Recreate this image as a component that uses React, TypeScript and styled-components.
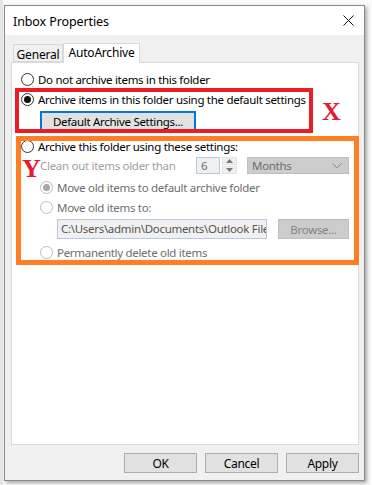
import React from "react";
import styled, { createGlobalStyle } from "styled-components";

const GlobalStyle = createGlobalStyle`
  html, body {
    margin: 0;
    padding: 0;
    background: #fbfbfb;
  }
  body {
    font-family: "Noto Sans", "Open Sans", sans-serif;
    font-size: 11.5px;
    letter-spacing: -0.3px;
    color: #000;
  }
`;

const Desk = styled.div`
  width: 372px;
  height: 485px;
  overflow: hidden;
  padding: 5px 0 0 4px;
  box-sizing: border-box;
  background: linear-gradient(90deg, #e6e6e6 0 3px, #fbfbfb 3px);
`;

const Window = styled.div`
  width: 361px;
  height: 476px;
  box-sizing: border-box;
  border: 1px solid #8a8a8a;
  background: #f0f0f0;
  box-shadow: 2px 2px 4px rgba(0, 0, 0, 0.35);
  display: flex;
  flex-direction: column;
`;

const TitleBar = styled.div`
  height: 29px;
  background: #fff;
  display: flex;
  align-items: center;
  justify-content: space-between;
  padding: 0 10px 0 8px;
  flex-shrink: 0;
`;

const Title = styled.span`
  font-size: 12.5px;
  letter-spacing: -0.1px;
  margin-top: 1px;
`;

const Body = styled.div`
  flex: 1;
  display: flex;
  flex-direction: column;
  padding: 7px 6px 0 6px;
`;

const TabStrip = styled.div`
  display: flex;
  align-items: flex-end;
  height: 20px;
  padding-left: 2px;
  position: relative;
  z-index: 1;
`;

const Tab = styled.div<{ $active?: boolean; $w: number }>`
  width: ${(p) => p.$w}px;
  height: ${(p) => (p.$active ? "20px" : "18px")};
  box-sizing: border-box;
  border: 1px solid #d9d9d9;
  border-bottom: ${(p) => (p.$active ? "none" : "1px solid #d9d9d9")};
  background: ${(p) => (p.$active ? "#fff" : "#f0f0f0")};
  padding-top: ${(p) => (p.$active ? "1px" : "2px")};
  margin-bottom: ${(p) => (p.$active ? "-1px" : "0")};
  text-align: center;
  line-height: 15px;
  font-size: 12px;
  letter-spacing: -0.2px;
`;

const Panel = styled.div`
  position: relative;
  width: 348px;
  height: 383px;
  box-sizing: border-box;
  border: 1px solid #d9d9d9;
  background: #fff;
  padding: 6px 0 0 9px;
  display: flex;
  flex-direction: column;
`;

const RadioRow = styled.div<{ $indent?: boolean; $dim?: boolean }>`
  height: 20px;
  display: flex;
  align-items: center;
  gap: 4px;
  padding-left: ${(p) => (p.$indent ? "19px" : "0")};
  color: ${(p) => (p.$dim ? "#6d6d6d" : "#000")};
  white-space: nowrap;
`;

const Radio = styled.span<{ $checked?: boolean; $dim?: boolean }>`
  width: 13px;
  height: 13px;
  box-sizing: border-box;
  border-radius: 50%;
  border: 1px solid ${(p) => (p.$dim ? "#bcbcbc" : "#333")};
  background: #fff;
  display: flex;
  align-items: center;
  justify-content: center;
  flex-shrink: 0;
  &::after {
    content: "";
    width: 7px;
    height: 7px;
    border-radius: 50%;
    background: ${(p) => (p.$dim ? "#a8a8a8" : "#111")};
    display: ${(p) => (p.$checked ? "block" : "none")};
  }
`;

const Button = styled.button<{ $focus?: boolean; $disabled?: boolean }>`
  height: 20px;
  box-sizing: border-box;
  font-family: "Noto Sans", "Open Sans", sans-serif;
  font-size: 11.5px;
  letter-spacing: -0.3px;
  padding: 0;
  background: ${(p) => (p.$disabled ? "#cccccc" : "#e1e1e1")};
  color: ${(p) => (p.$disabled ? "#838383" : "#000")};
  border: ${(p) =>
    p.$focus ? "2px solid #0078d7" : p.$disabled ? "1px solid #bfbfbf" : "1px solid #adadad"};
  display: flex;
  align-items: center;
  justify-content: center;
`;

const DefaultButton = styled(Button)`
  width: 156px;
  margin: 2px 0 0 19px;
`;

const SettingsRow = styled.div`
  display: flex;
  align-items: center;
  height: 17px;
  margin-top: 1px;
  padding-left: 19px;
`;

const DimLabel = styled.span`
  color: #a0a0a0;
  width: 156px;
  white-space: nowrap;
`;

const SpinBox = styled.div`
  width: 24px;
  height: 17px;
  box-sizing: border-box;
  border: 1px solid #b7c9de;
  background: #f0f0f0;
  color: #6d6d6d;
  padding-left: 4px;
  line-height: 15px;
`;

const Spinner = styled.div`
  width: 15px;
  height: 17px;
  margin-left: 2px;
  display: flex;
  flex-direction: column;
  gap: 1px;
`;

const SpinHalf = styled.div`
  flex: 1;
  background: #f0f0f0;
  border: 1px solid #e3e3e3;
  display: flex;
  align-items: center;
  justify-content: center;
`;

const Select = styled.div`
  margin-left: 10px;
  width: 102px;
  height: 17px;
  box-sizing: border-box;
  background: #cccccc;
  border: 1px solid #bfbfbf;
  color: #6d6d6d;
  display: flex;
  align-items: center;
  justify-content: space-between;
  padding: 0 6px 0 4px;
`;

const PathRow = styled.div`
  display: flex;
  align-items: center;
  gap: 11px;
  margin: 2px 0 3px 36px;
`;

const PathBox = styled.div`
  width: 210px;
  height: 20px;
  box-sizing: border-box;
  border: 1px solid #b7c9de;
  background: #f0f0f0;
  color: #555;
  padding-left: 3px;
  line-height: 18px;
  overflow: hidden;
  white-space: nowrap;
`;

const BrowseButton = styled(Button)`
  width: 71px;
`;

const Footer = styled.div`
  display: flex;
  justify-content: flex-end;
  gap: 8px;
  padding: 8px 0 0 0;
  margin-right: -1px;
`;

const FooterButton = styled(Button)`
  width: 73px;
  font-size: 12px;
`;

const Mark = styled.div<{ $color: string; $width: number }>`
  position: absolute;
  border: ${(p) => `${p.$width}px solid ${p.$color}`};
  pointer-events: none;
`;

const Letter = styled.span`
  position: absolute;
  font-family: "Liberation Serif", "DejaVu Serif", serif;
  font-weight: bold;
  font-size: 26px;
  letter-spacing: 0;
  line-height: 1;
  color: #e81a2c;
`;

const Chevron = () => (
  <svg width="10" height="6" viewBox="0 0 10 6">
    <path d="M0.5 0.5 L5 5 L9.5 0.5" fill="none" stroke="#8a8a8a" strokeWidth="1" />
  </svg>
);

const Arrow = ({ up }: { up?: boolean }) => (
  <svg width="7" height="4" viewBox="0 0 7 4">
    <path d={up ? "M0 4 L3.5 0 L7 4 Z" : "M0 0 L3.5 4 L7 0 Z"} fill="#7a7a7a" />
  </svg>
);

const CloseIcon = () => (
  <svg width="11" height="11" viewBox="0 0 11 11">
    <path d="M0.5 0.5 L10.5 10.5 M10.5 0.5 L0.5 10.5" stroke="#111" strokeWidth="1" />
  </svg>
);

export default function App() {
  return (
    <>
      <GlobalStyle />
      <Desk>
        <Window>
          <TitleBar>
            <Title>Inbox Properties</Title>
            <CloseIcon />
          </TitleBar>
          <Body>
            <TabStrip>
              <Tab $w={50}>General</Tab>
              <Tab $active $w={77}>AutoArchive</Tab>
            </TabStrip>
            <Panel>
              <RadioRow>
                <Radio />
                Do not archive items in this folder
              </RadioRow>
              <RadioRow>
                <Radio $checked />
                Archive items in this folder using the default settings
              </RadioRow>
              <DefaultButton $focus>Default Archive Settings...</DefaultButton>
              <RadioRow style={{ marginTop: 5 }}>
                <Radio />
                Archive this folder using these settings:
              </RadioRow>
              <SettingsRow>
                <DimLabel>Clean out items older than</DimLabel>
                <SpinBox>6</SpinBox>
                <Spinner>
                  <SpinHalf>
                    <Arrow up />
                  </SpinHalf>
                  <SpinHalf>
                    <Arrow />
                  </SpinHalf>
                </Spinner>
                <Select>
                  Months
                  <Chevron />
                </Select>
              </SettingsRow>
              <RadioRow $indent $dim style={{ marginTop: 3 }}>
                <Radio $checked $dim />
                Move old items to default archive folder
              </RadioRow>
              <RadioRow $indent $dim>
                <Radio $dim />
                Move old items to:
              </RadioRow>
              <PathRow>
                <PathBox>C:\Users\admin\Documents\Outlook File</PathBox>
                <BrowseButton $disabled>Browse...</BrowseButton>
              </PathRow>
              <RadioRow $indent $dim>
                <Radio $dim />
                Permanently delete old items
              </RadioRow>

              <Mark $color="#ed1c24" $width={4} style={{ left: 3, top: 25, width: 290, height: 37 }} />
              <Letter style={{ left: 310, top: 36 }}>X</Letter>
              <Mark $color="#ff7f27" $width={5} style={{ left: 4, top: 73, width: 333, height: 119 }} />
              <Letter style={{ left: 10, top: 93 }}>Y</Letter>
            </Panel>
            <Footer>
              <FooterButton>OK</FooterButton>
              <FooterButton>Cancel</FooterButton>
              <FooterButton>Apply</FooterButton>
            </Footer>
          </Body>
        </Window>
      </Desk>
    </>
  );
}
